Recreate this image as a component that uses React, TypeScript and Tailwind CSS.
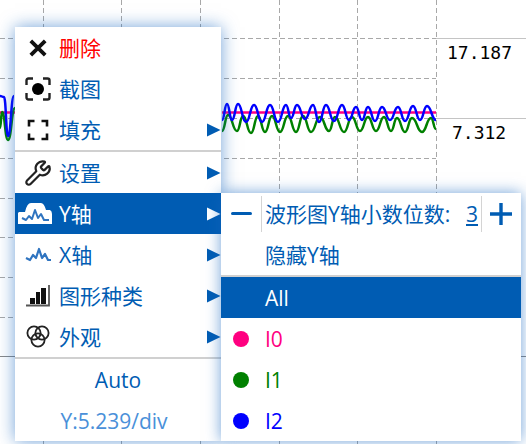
import React from 'react';
import { Wrench } from 'lucide-react';

const FONT = "font-['Open_Sans','Noto_Sans_CJK_SC',sans-serif]";

// sine-like path through alternating peaks and troughs
function wave(points: [number, number][]) {
  let d = `M${points[0][0]} ${points[0][1]}`;
  for (let i = 1; i < points.length; i++) {
    const [x0, y0] = points[i - 1];
    const [x1, y1] = points[i];
    const mid = (x0 + x1) / 2;
    d += ` C${mid} ${y0} ${mid} ${y1} ${x1} ${y1}`;
  }
  return d;
}

const blue: [number, number][] = [
  [222, 120], [227, 104], [232, 120], [238, 104], [246, 122], [254, 105], [262, 122], [270, 105], [278, 122],
  [286, 105], [291, 118], [297, 105], [305, 119], [313, 105], [319, 122], [326, 105], [334, 121], [342, 105],
  [349, 120], [356, 107], [362, 120], [368, 107], [375, 121], [382, 107], [390, 120], [398, 107], [405, 121],
  [413, 106], [420, 120], [427, 106], [436, 120],
];
const green: [number, number][] = [
  [222, 131], [228, 115], [237, 131], [243, 116], [251, 133], [258, 116], [265, 132], [272, 116], [280, 132],
  [288, 116], [296, 132], [303, 116], [311, 132], [320, 117], [329, 131], [335, 117], [344, 132], [352, 117],
  [360, 131], [368, 117], [376, 131], [384, 117], [391, 131], [397, 118], [405, 132], [412, 118], [422, 132],
  [431, 118], [436, 129],
];
const blueLeft: [number, number][] = [[0, 96], [4, 97], [8, 136], [14, 96]];
const greenLeft: [number, number][] = [[0, 128], [2, 112], [8, 140], [15, 108]];

function ChartBackground() {
  const vLines = [43.5, 121.5, 200.5, 279.5, 357.5, 436.5];
  const hLines = [38.5, 78.5, 118.5, 158.5, 198.5, 237.5, 277.5, 317.5];
  return (
    <svg className="block" width="526" height="444" viewBox="0 0 526 444">
      {vLines.map((x) => (
        <line key={x} x1={x} y1="0" x2={x} y2="444" stroke="#a8a8a8" strokeWidth="1" strokeDasharray="5 3" />
      ))}
      {hLines.map((y) => (
        <line key={y} x1="0" y1={y} x2="436" y2={y} stroke="#a8a8a8" strokeWidth="1" strokeDasharray="5 3" />
      ))}
      <line x1="436" y1="38.5" x2="526" y2="38.5" stroke="#c4c4c4" />
      <line x1="436" y1="118.5" x2="526" y2="118.5" stroke="#c4c4c4" />
      <line x1="0" y1="356.5" x2="526" y2="356.5" stroke="#888888" />
      <line x1="0" y1="112.5" x2="15" y2="112.5" stroke="#ff0080" strokeWidth="2.5" />
      <line x1="222" y1="112.5" x2="436" y2="112.5" stroke="#ff0080" strokeWidth="2.5" />
      <path d={wave(greenLeft)} fill="none" stroke="#008000" strokeWidth="2.5" />
      <path d={wave(blueLeft)} fill="none" stroke="#0000ff" strokeWidth="2.5" />
      <path d={wave(green)} fill="none" stroke="#008000" strokeWidth="2.5" />
      <path d={wave(blue)} fill="none" stroke="#0000ff" strokeWidth="2.5" />
    </svg>
  );
}

function Arrow({ white }: { white?: boolean }) {
  return (
    <svg className="absolute left-[192px] top-[14px]" width="14" height="14" viewBox="0 0 14 14">
      <polygon points="0,0.5 13.5,7 0,13.5" fill={white ? '#ffffff' : '#005cb3'} />
    </svg>
  );
}

function XIcon() {
  return (
    <svg width="18" height="18" viewBox="0 0 18 18">
      <path d="M1.8 1.8 L16.2 16.2 M16.2 1.8 L1.8 16.2" stroke="#111" strokeWidth="3.8" fill="none" />
    </svg>
  );
}

function ShotIcon() {
  return (
    <svg width="26" height="24" viewBox="0 0 26 24" fill="none">
      <path d="M1.5 8 V3.5 Q1.5 1.5 3.5 1.5 H8 M18 1.5 H22.5 Q24.5 1.5 24.5 3.5 V8 M24.5 16 V20.5 Q24.5 22.5 22.5 22.5 H18 M8 22.5 H3.5 Q1.5 22.5 1.5 20.5 V16" stroke="#222" strokeWidth="2.4" />
      <circle cx="13" cy="12" r="6" fill="#000" />
    </svg>
  );
}

function FillIcon() {
  return (
    <svg width="22" height="22" viewBox="0 0 22 22" fill="none">
      <path d="M2 7.5 V2 H7.5 M14.5 2 H20 V7.5 M20 14.5 V20 H14.5 M7.5 20 H2 V14.5" stroke="#111" strokeWidth="2.6" />
    </svg>
  );
}

function YIcon() {
  return (
    <svg width="34" height="24" viewBox="0 0 34 24">
      <path d="M1 10 H7 Q9 1 13 1 H23 Q26 1 28 8 H32 Q34 9 34 12 V22 H0 V11 Z" fill="#ffffff" />
      <path d="M4 16 L8 18 L11 14 L14 17 L17 8 L20 16 L23 12 L26 18 L31 18" fill="none" stroke="#2f74c0" strokeWidth="2" strokeLinejoin="round" />
    </svg>
  );
}

function XAxisIcon() {
  return (
    <svg width="26" height="16" viewBox="0 0 26 16">
      <path d="M1 11 L5 13 L8 8 L11 11 L14 2 L17 11 L20 7 L23 13 L26 13" fill="none" stroke="#2f74c0" strokeWidth="2.2" strokeLinejoin="round" />
    </svg>
  );
}

function BarsIcon() {
  return (
    <svg width="24" height="22" viewBox="0 0 24 22">
      <rect x="4" y="13" width="5" height="6" fill="#111" />
      <rect x="10" y="7" width="4" height="12" fill="#111" />
      <rect x="15" y="3" width="5" height="16" fill="#111" />
      <path d="M0 20.5 H23 V0" stroke="#555" strokeWidth="1.8" fill="none" />
    </svg>
  );
}

function CirclesIcon() {
  return (
    <svg width="24" height="23" viewBox="0 0 24 23" fill="none" stroke="#222" strokeWidth="1.8">
      <circle cx="8" cy="8" r="6.6" />
      <circle cx="16" cy="8" r="6.6" />
      <circle cx="12" cy="15" r="6.6" />
    </svg>
  );
}

function Row({ icon, label, arrow, danger }: { icon: React.ReactNode; label: string; arrow?: boolean; danger?: boolean }) {
  return (
    <div className="relative flex h-[41px] items-center">
      <div className="flex w-[44px] justify-center pl-[1px]">{icon}</div>
      <span className={danger ? 'pt-[2px] text-[#ff0000]' : 'pt-[2px] text-[#005cb3]'}>{label}</span>
      {arrow && <Arrow />}
    </div>
  );
}

function SeriesRow({ dot, label, text }: { dot: string; label: string; text: string }) {
  return (
    <div className="flex h-[41px] items-center">
      <div className="w-[44px]">
        <div className={`ml-[12px] h-[16px] w-[16px] rounded-full ${dot}`} />
      </div>
      <span className={`pt-[2px] ${text}`}>{label}</span>
    </div>
  );
}

function SubMenu() {
  return (
    <div className="absolute left-[206px] top-[166px] w-[300px] bg-white shadow-[0_0_14px_rgba(20,100,190,0.6)]">
      <div className="flex h-[41px] items-center text-[#005cb3]">
        <div className="flex w-[40px] justify-center pl-[1px]">
          <div className="h-[3px] w-[21px] rounded-full bg-[#005cb3]" />
        </div>
        <div className="h-[36px] w-px bg-[#d4d4d4]" />
        <span className="ml-[3px] w-[201px] whitespace-nowrap pt-[2px]">波形图Y轴小数位数:</span>
        <span className="w-[15px] pt-[2px] underline underline-offset-2">3</span>
        <div className="h-[36px] w-px bg-[#d4d4d4]" />
        <svg className="ml-[8px]" width="22" height="22" viewBox="0 0 22 22">
          <path d="M0 11 H22 M11 0 V22" stroke="#005cb3" strokeWidth="3.4" />
        </svg>
      </div>
      <div className="flex h-[41px] items-center pl-[44px] pt-[2px] text-[#005cb3]">隐藏Y轴</div>
      <div className="h-[2px] bg-[#d0d0d0]" />
      <div className="flex h-[41px] items-center bg-[#005cb3] pl-[44px] pt-[2px] text-white">All</div>
      <SeriesRow dot="bg-[#ff0080]" label="I0" text="text-[#ff0080]" />
      <SeriesRow dot="bg-[#008000]" label="I1" text="text-[#008000]" />
      <SeriesRow dot="bg-[#0000ff]" label="I2" text="text-[#0000ff]" />
    </div>
  );
}

function ContextMenu() {
  return (
    <div className={`absolute left-[15px] top-[27px] w-[206px] bg-white text-[21px] leading-none shadow-[0_0_16px_rgba(20,100,190,0.6)] ${FONT}`}>
      <Row icon={<XIcon />} label="删除" danger />
      <Row icon={<ShotIcon />} label="截图" />
      <Row icon={<FillIcon />} label="填充" arrow />
      <div className="h-[2px] bg-[#d0d0d0]" />
      <Row icon={<Wrench size={28} strokeWidth={1.9} className="text-[#222]" />} label="设置" arrow />
      <div className="relative flex h-[41px] items-center bg-[#005cb3]">
        <div className="flex w-[40px] justify-center">
          <YIcon />
        </div>
        <span className="ml-[4px] pt-[2px] text-white">Y轴</span>
        <Arrow white />
      </div>
      <Row icon={<XAxisIcon />} label="X轴" arrow />
      <Row icon={<BarsIcon />} label="图形种类" arrow />
      <Row icon={<CirclesIcon />} label="外观" arrow />
      <div className="h-[2px] bg-[#d0d0d0]" />
      <div className="flex h-[41px] items-center justify-center pt-[2px] text-[#005cb3]">Auto</div>
      <div className="flex h-[41px] items-center justify-center pr-[8px] pt-[2px] text-[#4a90d9]">Y:5.239/div</div>
      <SubMenu />
    </div>
  );
}

export default function App() {
  return (
    <div className="relative h-[444px] w-[526px] overflow-hidden bg-white">
      <ChartBackground />
      <div className="absolute left-[447px] top-[42px] font-['DejaVu_Sans_Mono',monospace] text-[18px] leading-[22px] text-black">17.187</div>
      <div className="absolute left-[452px] top-[122px] font-['DejaVu_Sans_Mono',monospace] text-[18px] leading-[22px] text-black">7.312</div>
      <ContextMenu />
    </div>
  );
}
